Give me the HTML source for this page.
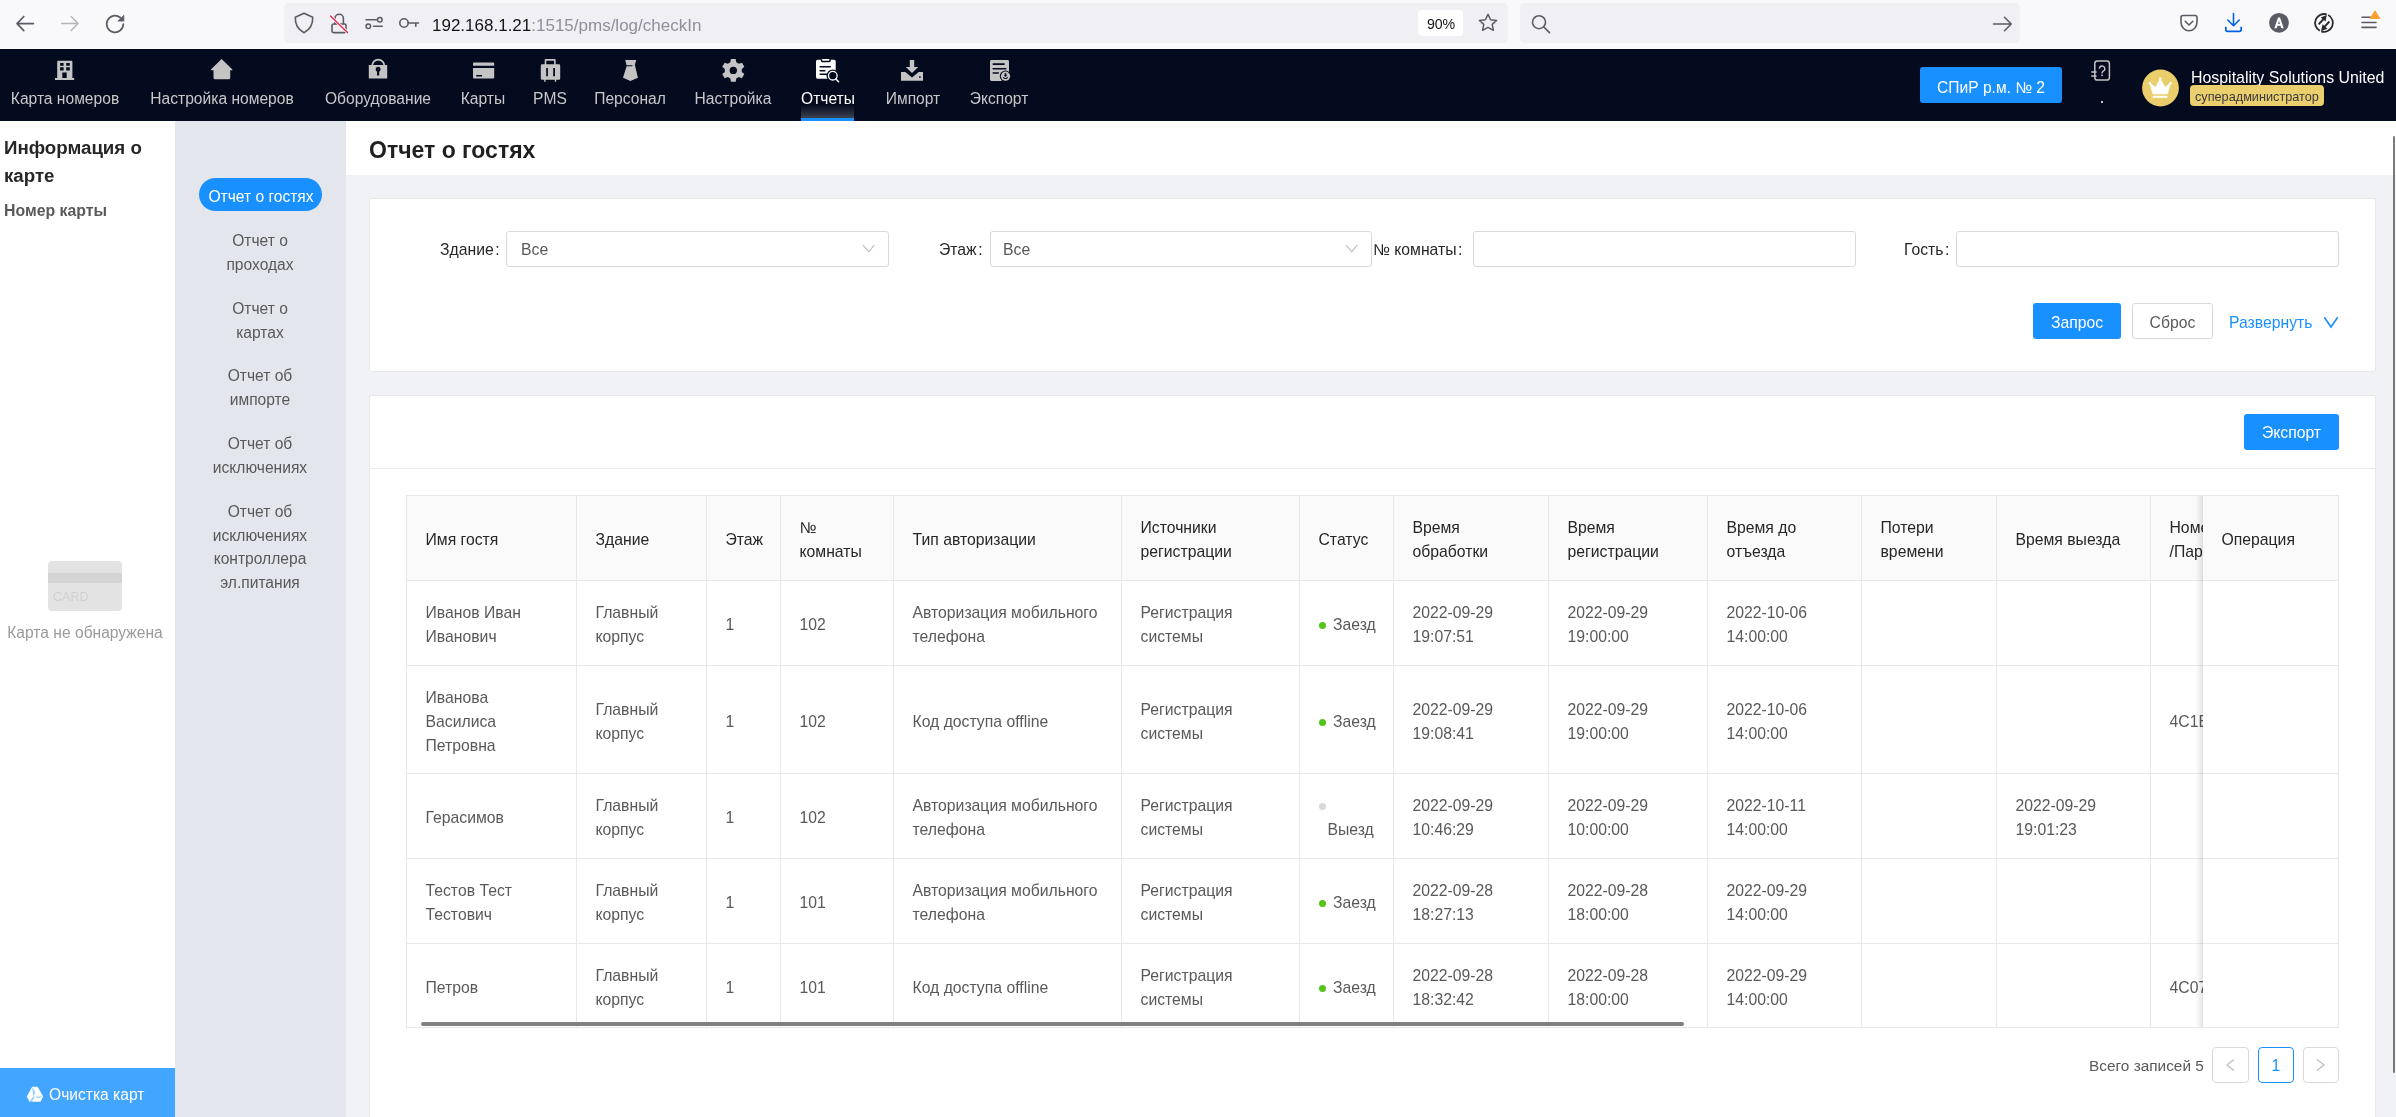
<!DOCTYPE html>
<html><head><meta charset="utf-8">
<style>
*{box-sizing:border-box}
html,body{margin:0;padding:0}
body{width:2396px;height:1117px;overflow:hidden;position:relative;background:#fff;font-family:"Liberation Sans",sans-serif;color:#262626}
.a{position:absolute}
.t{position:absolute;white-space:nowrap;line-height:1}
/* chrome */
#chrome{left:0;top:0;width:2396px;height:49px;background:#F9F9FB;border-bottom:1px solid #FDFDFD}
#url{left:284px;top:3px;width:1224px;height:40px;background:#F0F0F4;border-radius:5px}
#srch{left:1520px;top:3px;width:500px;height:40px;background:#F0F0F4;border-radius:5px}
/* nav */
#nav{left:0;top:49px;width:2396px;height:72px;background:#050B1E}
.ni{position:absolute;top:90.8px;font-size:15.6px;letter-spacing:0px;color:#C8C8C8;white-space:nowrap;line-height:1;transform:translateX(-50%)}
.ic{position:absolute;fill:#C4C4C4}
/* left */
#left{left:0;top:121px;width:175px;height:996px;background:#fff}
#sub{left:175px;top:121px;width:170px;height:996px;background:#E3E6ED}
.si{position:absolute;left:175px;width:170px;text-align:center;font-size:15.6px;line-height:23.7px;color:#595959;margin-top:1.2px}
#main{left:345px;top:121px;width:2051px;height:996px;background:#F0F2F5}
#mhead{left:345px;top:121px;width:2051px;height:54px;background:#fff}
.card{position:absolute;background:#fff;border:1px solid #E8E8E8;border-radius:2px}
.lbl{position:absolute;font-size:15.75px;color:#262626;white-space:nowrap;line-height:20px}
.inp{position:absolute;top:231px;height:36px;border:1px solid #D9D9D9;border-radius:3px;background:#fff}
.btn{position:absolute;border-radius:3px;font-size:15.75px;text-align:center;white-space:nowrap}
.cell{position:absolute;display:flex;align-items:center;padding:4px 0 0 18.5px;font-size:15.75px;line-height:24px;white-space:nowrap;overflow:hidden}
.dot{display:inline-block;width:7px;height:7px;border-radius:50%;background:#52C41A;margin-right:7.5px;vertical-align:middle;position:relative;top:-0.1px}
.t,.ni,.si,.cell,.lbl,.btn{will-change:transform}
</style></head><body>

<div id="chrome" class="a"></div>
<div id="url" class="a"></div>
<div id="srch" class="a"></div>
<!-- chrome icons -->
<svg class="a" style="left:0;top:0" width="2396" height="48" viewBox="0 0 2396 48">
 <g fill="none" stroke-linecap="round" stroke-linejoin="round">
  <!-- back -->
  <path d="M17 23.6H33.4M23.8 16.5L17 23.6L23.8 30.6" stroke="#5B5B66" stroke-width="1.7"/>
  <!-- forward -->
  <path d="M61.6 23.6H78M71.2 16.5L78 23.6L71.2 30.6" stroke="#B4B4BB" stroke-width="1.5"/>
  <!-- reload -->
  <path d="M123.3 24A8.3 8.3 0 1 1 120.2 17.5" stroke="#5B5B66" stroke-width="1.7"/>
  <path d="M123.8 15.6V21.1H118.3Z" fill="#5B5B66" stroke="#5B5B66" stroke-width="0.8"/>
  <!-- shield -->
  <path d="M304 13.2L312.7 17.3C313 24 310 29.5 304 32.8C298 29.5 295 24 295.3 17.3Z" stroke="#5B5B66" stroke-width="1.6"/>
  <!-- lock with slash -->
  <path d="M332 25.5C332 24.5 332.6 24 333.6 24H344.6C345.6 24 346 24.5 346 25.5V31.3C346 32.1 345.5 32.6 344.6 32.6H333.6C332.6 32.6 332 32.1 332 31.3Z" stroke="#5B5B66" stroke-width="1.6"/>
  <path d="M335 24V18.5A4.2 4.2 0 0 1 343.4 18.5V24" stroke="#5B5B66" stroke-width="1.6"/>
  <path d="M330.5 16L347.5 32.4" stroke="#F9F9FB" stroke-width="3"/>
  <path d="M330.5 16L347.5 32.4" stroke="#E8234E" stroke-width="1.4"/>
  <!-- permissions sliders -->
  <path d="M366 19.8H376.5M373.5 26.3H382.2" stroke="#5B5B66" stroke-width="1.5"/>
  <circle cx="379.8" cy="19.7" r="2.3" stroke="#5B5B66" stroke-width="1.5"/>
  <circle cx="368.3" cy="26.2" r="2.3" stroke="#5B5B66" stroke-width="1.5"/>
  <!-- key -->
  <circle cx="404" cy="23" r="4.2" stroke="#5B5B66" stroke-width="1.6"/>
  <path d="M408.2 23H418.5M415.8 23V26.3" stroke="#5B5B66" stroke-width="1.6"/>
  <!-- star -->
  <path d="M1488 14.2L1490.6 19.7L1496.6 20.4L1492.2 24.4L1493.4 30.3L1488 27.3L1482.6 30.3L1483.8 24.4L1479.4 20.4L1485.4 19.7Z" stroke="#5B5B66" stroke-width="1.5"/>
  <!-- search -->
  <circle cx="1539" cy="22.2" r="6.5" stroke="#5B5B66" stroke-width="1.6"/>
  <path d="M1543.8 27L1549.5 32.6" stroke="#5B5B66" stroke-width="1.7"/>
  <!-- go arrow -->
  <path d="M1993.5 24H2011.2M2004.5 17.3L2011.2 24L2004.5 30.7" stroke="#5B5B66" stroke-width="1.6"/>
  <!-- pocket -->
  <path d="M2181 17.5C2181 16.2 2181.8 15.5 2183 15.5H2195C2196.3 15.5 2197 16.2 2197 17.5V22C2197 27 2193.5 30.8 2189 30.8C2184.5 30.8 2181 27 2181 22Z" stroke="#5B5B66" stroke-width="1.6"/>
  <path d="M2185.2 21.3L2189 25L2192.8 21.3" stroke="#5B5B66" stroke-width="1.6"/>
  <!-- download -->
  <path d="M2233.5 13.5V25.5M2227.8 20L2233.5 25.7L2239.2 20" stroke="#0061E0" stroke-width="1.6"/>
  <path d="M2225.8 27.3V29.5C2225.8 30.8 2226.6 31.4 2227.8 31.4H2239.2C2240.4 31.4 2241.2 30.8 2241.2 29.5V27.3" stroke="#0061E0" stroke-width="1.7"/>
  <!-- menu -->
  <path d="M2362 17.3H2370.5M2362 22.5H2376M2362 27.4H2376" stroke="#5B5B66" stroke-width="1.6"/>
 </g>
 <!-- avatar A -->
 <circle cx="2279" cy="22.8" r="9.9" fill="#5B5B66"/>
 <path d="M2274.3 28.3L2278 17.5H2280L2283.7 28.3H2281.3L2280.5 25.8H2277.5L2276.7 28.3ZM2278.1 23.9H2279.9L2279 20.8Z" fill="#fff"/>
 <!-- extension -->
 <path d="M2328.18 15.04A8.9 8.9 0 0 1 2321.25 31.36M2319.82 30.76A8.9 8.9 0 0 1 2326.75 14.44" fill="none" stroke="#2B2A33" stroke-width="1.8"/>
 <path d="M2318.6 24.4L2323.6 19M2329.4 21.5L2324.4 26.8" fill="none" stroke="#2B2A33" stroke-width="1.9"/>
 <path d="M2320.7 17.6L2326.7 15L2325.6 21.4ZM2322.6 24.2L2321 31L2327.5 28.8Z" fill="#2B2A33"/>
 <!-- orange badge -->
 <path d="M2375 10.8L2379.8 18.4H2370.2Z" fill="#FF9F2F" stroke="#FF9F2F" stroke-width="1" stroke-linejoin="round"/>
</svg>
<div class="a" style="left:1418px;top:10px;width:45px;height:26px;background:#fff;border-radius:4px"></div>
<div class="t" style="left:1426.5px;top:17.4px;font-size:14.2px;letter-spacing:-0.2px;color:#15141A">90%</div>
<div class="t" style="left:432px;top:17.4px;font-size:17px;color:#15141A">192.168.1.21<span style="color:#8F8F9D">:1515/pms/log/checkIn</span></div>

<div id="nav" class="a"></div>
<div class="ni" style="left:65px">Карта номеров</div>
<div class="ni" style="left:221.7px">Настройка номеров</div>
<div class="ni" style="left:377.5px">Оборудование</div>
<div class="ni" style="left:482.5px">Карты</div>
<div class="ni" style="left:550.4px">PMS</div>
<div class="ni" style="left:630.2px">Персонал</div>
<div class="ni" style="left:733.3px">Настройка</div>
<div class="ni" style="left:827.6px;color:#fff">Отчеты</div>
<div class="ni" style="left:912.5px">Импорт</div>
<div class="ni" style="left:999.2px">Экспорт</div>
<div class="a" style="left:801px;top:105px;width:53px;height:16px;background:linear-gradient(#050B1E,#4A4E5C)"></div>
<div class="a" style="left:801px;top:118px;width:53px;height:3px;background:#1890FF"></div>
<svg class="a" style="left:0;top:49px" width="1100" height="72" viewBox="0 49 1100 72">
 <g fill="#C4C4C4">
  <!-- building -->
  <path fill-rule="evenodd" d="M57.2 61.8Q57.2 60.8 58.2 60.8H71.4Q72.4 60.8 72.4 61.8V78H74.2V80H55V78H57.2ZM60.1 62.9V65.8H63.6V62.9ZM66.2 62.9V65.8H69.8V62.9ZM60.1 67.2V70.4H63.6V67.2ZM66.2 67.2V70.4H69.8V67.2ZM62.3 72.5V78H66.7V72.5Z"/>
  <!-- house -->
  <path d="M221.6 59L232.4 69.6V70.3H230.2V77.7Q230.2 79.2 228.7 79.2H215Q213.5 79.2 213.5 77.7V70.3H210.9V69.6Z"/>
  <!-- lock -->
  <path fill-rule="evenodd" d="M371.4 64.9V65.6A6.85 6.85 0 0 1 385.1 65.6V64.9H387.2V78.4H368.8V64.9ZM373.1 64.9H383.4V65.6A5.15 5.15 0 0 0 373.1 65.6ZM378.1 66.8A2.6 2.6 0 0 0 377 71.7V75.6H379.2V71.7A2.6 2.6 0 0 0 378.1 66.8Z"/>
  <!-- card -->
  <path fill-rule="evenodd" d="M473 63.6Q473 62.6 474 62.6H493.2Q494.2 62.6 494.2 63.6V65.8H473ZM473 68.1H494.2V77.4Q494.2 78.4 493.2 78.4H474Q473 78.4 473 77.4ZM476.2 74.9V76.4H482V74.9Z"/>
  <!-- suitcase -->
  <path fill-rule="evenodd" d="M544.7 64.3V60.3Q544.7 59.1 545.9 59.1H554.5Q555.7 59.1 555.7 60.3V64.3H558.8Q560.2 64.3 560.2 65.7V78.4Q560.2 79.8 558.8 79.8H556.2V81.8H554.8V79.8H545.6V81.8H544.2V79.8H542.2Q540.8 79.8 540.8 78.4V65.7Q540.8 64.3 542.2 64.3ZM546.3 64.3H554.1V60.7H546.3ZM546.2 68.1V76.3H547.9V68.1ZM553.2 68.1V76.3H555V68.1Z"/>
  <!-- tie -->
  <path d="M625.2 60H636.2L634.8 65.2H626.6Z"/>
  <path d="M626.6 66.3H632.2L632.8 65H634.9L637.9 77.8L630.4 81.1L623 77.8Z"/>
  <!-- gear -->
  <path fill-rule="evenodd" d="M730.36 62.32L730.89 59.05L735.71 59.05L736.24 62.32L738.83 63.81L741.92 62.64L744.33 66.82L741.77 68.91L741.77 71.89L744.33 73.98L741.92 78.16L738.83 76.99L736.24 78.48L735.71 81.75L730.89 81.75L730.36 78.48L727.77 76.99L724.68 78.16L722.27 73.98L724.83 71.89L724.83 68.91L722.27 66.82L724.68 62.64L727.77 63.81ZM737.00 70.4A3.7 3.7 0 1 0 729.60 70.4A3.7 3.7 0 1 0 737.00 70.4Z"/>
  <!-- download tray -->
  <path d="M909.8 60H914.2V67H918.2L912 73L905.8 67H909.8Z"/>
  <path fill-rule="evenodd" d="M901 72H905.3L912 77.6L918.7 72H923V80.7H901ZM919.2 76.3V77.9H920.6V76.3Z"/>
  <!-- export doc -->
  <defs><mask id="em"><rect x="980" y="50" width="40" height="40" fill="#fff"/>
   <rect x="992.4" y="63.3" width="12.5" height="1.6" rx="0.8" fill="#000"/>
   <rect x="992.4" y="67.9" width="14.2" height="1.6" rx="0.8" fill="#000"/>
   <rect x="992.4" y="72.2" width="6.7" height="1.6" rx="0.8" fill="#000"/>
   <circle cx="1005.5" cy="76.2" r="5.7" fill="#000"/>
  </mask></defs>
  <rect x="990" y="60" width="19" height="20.9" rx="1.4" mask="url(#em)"/>
  <circle cx="1005.5" cy="76.2" r="4.6"/>
  <path d="M1004.6 73.3H1006.4V75.2H1007.3L1005.5 77L1003.7 75.2H1004.6Z" fill="#050B1E"/>
  <path d="M1003.2 77.3Q1005.5 79.6 1007.8 77.3" fill="none" stroke="#050B1E" stroke-width="1.1"/>
 </g>
 <!-- report (white) -->
 <defs><mask id="rm"><rect x="800" y="50" width="50" height="40" fill="#fff"/>
  <path d="M820.8 59.5H830.8V60.6Q830.8 62.2 829.2 62.2H822.4Q820.8 62.2 820.8 60.6Z" fill="#000"/>
  <rect x="819.4" y="66" width="11.6" height="1.5" rx="0.7" fill="#000"/>
  <rect x="819.4" y="69.9" width="6.2" height="1.5" rx="0.7" fill="#000"/>
  <rect x="819.4" y="73.5" width="8" height="1.5" rx="0.7" fill="#000"/>
  <circle cx="832.8" cy="75.7" r="6.3" fill="#000"/>
 </mask></defs>
 <g fill="#fff">
  <rect x="816" y="59.7" width="19.7" height="19" rx="1.6" mask="url(#rm)"/>
  <rect x="822.1" y="58.9" width="7.3" height="1.9" rx="0.9"/>
  <circle cx="832.8" cy="75.7" r="4.3" fill="none" stroke="#fff" stroke-width="1.3"/>
  <path d="M835.9 79L838.6 81.8" stroke="#fff" stroke-width="1.5" stroke-linecap="round"/>
 </g>
</svg>

<!-- nav right -->
<div class="a" style="left:1920px;top:67px;width:142px;height:36px;background:#1890FF;border-radius:3px"></div>
<div class="t" style="left:1991px;top:80.4px;font-size:15.6px;color:#fff;transform:translateX(-50%)">СПиР р.м. № 2</div>
<svg class="a" style="left:2080px;top:52px" width="320" height="64" viewBox="2080 52 320 64">
 <rect x="2094.8" y="61" width="14.6" height="19" rx="2.6" fill="none" stroke="#C4C4C4" stroke-width="1.5"/>
 <path d="M2091.2 72H2096.6M2091.2 76H2096.6" stroke="#C4C4C4" stroke-width="1.4"/>
 <path d="M2099.4 68.6A2.7 2.7 0 1 1 2103.2 71.2Q2102 72 2102 73.6" fill="none" stroke="#C4C4C4" stroke-width="1.4"/>
 <rect x="2101.2" y="74.6" width="1.6" height="1.6" fill="#C4C4C4"/>
 <rect x="2101" y="101" width="2" height="2" fill="#C4C4C4"/>
 <circle cx="2160.5" cy="88" r="18.4" fill="#EBCE6C"/>
 <path d="M2150.2 83.6L2155.6 87.6L2160.3 79.2L2165 87.6L2170.2 83.6L2167.4 93.8H2153Z" fill="#fff" stroke="#fff" stroke-width="1" stroke-linejoin="round"/>
 <circle cx="2160.3" cy="78.8" r="1.3" fill="#fff"/>
 <circle cx="2150" cy="83.3" r="1.3" fill="#fff"/>
 <circle cx="2170.6" cy="83.3" r="1.3" fill="#fff"/>
 <rect x="2152.8" y="95.8" width="14.6" height="2" fill="#fff"/>
</svg>
<div class="t" style="left:2190.6px;top:69.6px;font-size:15.9px;color:#fff">Hospitality Solutions United</div>
<div class="a" style="left:2190px;top:85px;width:134px;height:21px;background:#EBCF6E;border-radius:4px"></div>
<div class="t" style="left:2195px;top:91px;font-size:12.7px;color:#3A3A3A">суперадминистратор</div>

<div id="left" class="a"></div>
<div id="sub" class="a"></div>
<div id="main" class="a"></div>
<div id="mhead" class="a"></div>
<div class="a" style="left:345px;top:121px;width:1px;height:996px;background:#E4E5E9"></div>

<!-- left panel -->
<div class="t" style="left:4.3px;top:138.6px;font-size:18.7px;font-weight:700;color:#262626">Информация о</div>
<div class="t" style="left:4.3px;top:166.5px;font-size:18.7px;font-weight:700;color:#262626">карте</div>
<div class="t" style="left:4.3px;top:203.3px;font-size:15.85px;font-weight:700;color:#595959">Номер карты</div>
<div class="a" style="left:48px;top:561px;width:74px;height:50px;background:#E3E3E3;border-radius:4px;overflow:hidden">
 <div class="a" style="left:0;top:12.4px;width:74px;height:9.4px;background:#D4D4D4"></div>
 <div class="t" style="left:5.3px;top:30px;font-size:12.6px;color:#D0D0D0">CARD</div>
</div>
<div class="t" style="left:85px;top:625.1px;font-size:15.6px;color:#9A9A9A;transform:translateX(-50%)">Карта не обнаружена</div>
<div class="a" style="left:0;top:1068px;width:175px;height:49px;background:#42A5FF"></div>
<svg class="a" style="left:26px;top:1086px" width="18" height="17" viewBox="0 0 18 17">
 <path d="M6.2 0.8H11.6L17.2 10.4L14.5 15.8H3.5L0.8 10.4Z" fill="#fff"/>
 <path d="M6.2 0.8L9.5 6.6L7.2 10.4ZM17.2 10.4H9.4L11.9 12.3ZM3.5 15.8L7.2 10.4H9L5.8 15.8Z" fill="#42A5FF" opacity="0.55"/>
</svg>
<div class="t" style="left:48.7px;top:1086.9px;font-size:15.6px;color:#fff">Очистка карт</div>

<!-- sub nav -->
<div class="a" style="left:199px;top:178px;width:123px;height:33px;background:#1890FF;border-radius:17px"></div>
<div class="t" style="left:260.5px;top:188.7px;font-size:15.6px;color:#fff;transform:translateX(-50%)">Отчет о гостях</div>
<div class="si" style="top:227.4px">Отчет о<br>проходах</div>
<div class="si" style="top:295.4px">Отчет о<br>картах</div>
<div class="si" style="top:362.4px">Отчет об<br>импорте</div>
<div class="si" style="top:430.4px">Отчет об<br>исключениях</div>
<div class="si" style="top:498.4px">Отчет об<br>исключениях<br>контроллера<br>эл.питания</div>

<!-- main -->
<div class="t" style="left:368.8px;top:138.5px;font-size:23px;font-weight:700;color:#1F1F1F">Отчет о гостях</div>
<div class="card" style="left:369px;top:198px;width:2007px;height:174px"></div>
<div class="card" style="left:369px;top:395px;width:2007px;height:740px"></div>

<!-- filter form -->
<div class="lbl" style="left:439.7px;top:240px">Здание<span style="margin-left:1.5px">:</span></div>
<div class="inp" style="left:506px;width:383px"></div>
<div class="t" style="left:520.5px;top:242px;font-size:15.75px;color:#595959">Все</div>
<svg class="a" style="left:860px;top:242px" width="18" height="14"><path d="M3 3.2L8.8 9.9L14.2 3.2" fill="none" stroke="#BFBFBF" stroke-width="1.15"/></svg>
<div class="lbl" style="left:938.8px;top:240px">Этаж<span style="margin-left:1.5px">:</span></div>
<div class="inp" style="left:990px;width:382px"></div>
<div class="t" style="left:1003.4px;top:242px;font-size:15.75px;color:#595959">Все</div>
<svg class="a" style="left:1343px;top:242px" width="18" height="14"><path d="M3 3.2L8.8 9.9L14.2 3.2" fill="none" stroke="#BFBFBF" stroke-width="1.15"/></svg>
<div class="lbl" style="left:1373.3px;top:240px">№ комнаты<span style="margin-left:1.5px">:</span></div>
<div class="inp" style="left:1473px;width:383px"></div>
<div class="lbl" style="left:1903.5px;top:240px">Гость<span style="margin-left:1.5px">:</span></div>
<div class="inp" style="left:1956px;width:383px"></div>

<div class="btn" style="left:2033px;top:303px;width:88px;height:36px;background:#1890FF;color:#fff;line-height:39px">Запрос</div>
<div class="btn" style="left:2132px;top:303px;width:81px;height:36px;background:#fff;border:1px solid #D9D9D9;color:#595959;line-height:37px">Сброс</div>
<div class="t" style="left:2229.3px;top:314.5px;font-size:15.75px;color:#1890FF">Развернуть</div>
<svg class="a" style="left:2322px;top:314px" width="18" height="16"><path d="M2.3 3.2L9 13L15.7 3.2" fill="none" stroke="#1890FF" stroke-width="1.6"/></svg>

<!-- table card header -->
<div class="btn" style="left:2244px;top:414px;width:95px;height:36px;background:#1890FF;color:#fff;line-height:38px">Экспорт</div>
<div class="a" style="left:370px;top:468px;width:2005px;height:1px;background:#EBEBEB"></div>

<!-- TABLE START -->
<div class="a" style="left:406px;top:495px;width:1933px;height:86px;background:#FAFAFA"></div>
<div class="a" style="left:406px;top:495px;width:1933px;height:1px;background:#E8E8E8"></div>
<div class="a" style="left:406px;top:580px;width:1933px;height:1px;background:#E8E8E8"></div>
<div class="a" style="left:406px;top:665px;width:1933px;height:1px;background:#E8E8E8"></div>
<div class="a" style="left:406px;top:773px;width:1933px;height:1px;background:#E8E8E8"></div>
<div class="a" style="left:406px;top:858px;width:1933px;height:1px;background:#E8E8E8"></div>
<div class="a" style="left:406px;top:943px;width:1933px;height:1px;background:#E8E8E8"></div>
<div class="a" style="left:406px;top:1027px;width:1933px;height:1px;background:#E8E8E8"></div>
<div class="a" style="left:406px;top:495px;width:1px;height:533px;background:#E8E8E8"></div>
<div class="a" style="left:576px;top:495px;width:1px;height:533px;background:#E8E8E8"></div>
<div class="a" style="left:706px;top:495px;width:1px;height:533px;background:#E8E8E8"></div>
<div class="a" style="left:780px;top:495px;width:1px;height:533px;background:#E8E8E8"></div>
<div class="a" style="left:893px;top:495px;width:1px;height:533px;background:#E8E8E8"></div>
<div class="a" style="left:1121px;top:495px;width:1px;height:533px;background:#E8E8E8"></div>
<div class="a" style="left:1299px;top:495px;width:1px;height:533px;background:#E8E8E8"></div>
<div class="a" style="left:1393px;top:495px;width:1px;height:533px;background:#E8E8E8"></div>
<div class="a" style="left:1548px;top:495px;width:1px;height:533px;background:#E8E8E8"></div>
<div class="a" style="left:1707px;top:495px;width:1px;height:533px;background:#E8E8E8"></div>
<div class="a" style="left:1861px;top:495px;width:1px;height:533px;background:#E8E8E8"></div>
<div class="a" style="left:1996px;top:495px;width:1px;height:533px;background:#E8E8E8"></div>
<div class="a" style="left:2150px;top:495px;width:1px;height:533px;background:#E8E8E8"></div>
<div class="a" style="left:2338px;top:495px;width:1px;height:533px;background:#E8E8E8"></div>
<div class="cell" style="left:407px;top:496px;width:169px;height:84px;color:#262626"><div>Имя гостя</div></div>
<div class="cell" style="left:577px;top:496px;width:129px;height:84px;color:#262626"><div>Здание</div></div>
<div class="cell" style="left:707px;top:496px;width:73px;height:84px;color:#262626"><div>Этаж</div></div>
<div class="cell" style="left:781px;top:496px;width:112px;height:84px;color:#262626"><div>№<br>комнаты</div></div>
<div class="cell" style="left:894px;top:496px;width:227px;height:84px;color:#262626"><div>Тип авторизации</div></div>
<div class="cell" style="left:1122px;top:496px;width:177px;height:84px;color:#262626"><div>Источники<br>регистрации</div></div>
<div class="cell" style="left:1300px;top:496px;width:93px;height:84px;color:#262626"><div>Статус</div></div>
<div class="cell" style="left:1394px;top:496px;width:154px;height:84px;color:#262626"><div>Время<br>обработки</div></div>
<div class="cell" style="left:1549px;top:496px;width:158px;height:84px;color:#262626"><div>Время<br>регистрации</div></div>
<div class="cell" style="left:1708px;top:496px;width:153px;height:84px;color:#262626"><div>Время до<br>отъезда</div></div>
<div class="cell" style="left:1862px;top:496px;width:134px;height:84px;color:#262626"><div>Потери<br>времени</div></div>
<div class="cell" style="left:1997px;top:496px;width:153px;height:84px;color:#262626"><div>Время выезда</div></div>
<div class="cell" style="left:2151px;top:496px;width:187px;height:84px;color:#262626"><div>Номер<br>/Пароль</div></div>
<div class="cell" style="left:407px;top:581px;width:169px;height:84px;color:#595959"><div>Иванов Иван<br>Иванович</div></div>
<div class="cell" style="left:577px;top:581px;width:129px;height:84px;color:#595959"><div>Главный<br>корпус</div></div>
<div class="cell" style="left:707px;top:581px;width:73px;height:84px;color:#595959"><div>1</div></div>
<div class="cell" style="left:781px;top:581px;width:112px;height:84px;color:#595959"><div>102</div></div>
<div class="cell" style="left:894px;top:581px;width:227px;height:84px;color:#595959"><div>Авторизация мобильного<br>телефона</div></div>
<div class="cell" style="left:1122px;top:581px;width:177px;height:84px;color:#595959"><div>Регистрация<br>системы</div></div>
<div class="cell" style="left:1300px;top:581px;width:93px;height:84px;color:#595959"><div><span class="dot"></span>Заезд</div></div>
<div class="cell" style="left:1394px;top:581px;width:154px;height:84px;color:#595959"><div>2022-09-29<br>19:07:51</div></div>
<div class="cell" style="left:1549px;top:581px;width:158px;height:84px;color:#595959"><div>2022-09-29<br>19:00:00</div></div>
<div class="cell" style="left:1708px;top:581px;width:153px;height:84px;color:#595959"><div>2022-10-06<br>14:00:00</div></div>
<div class="cell" style="left:407px;top:666px;width:169px;height:107px;color:#595959"><div>Иванова<br>Василиса<br>Петровна</div></div>
<div class="cell" style="left:577px;top:666px;width:129px;height:107px;color:#595959"><div>Главный<br>корпус</div></div>
<div class="cell" style="left:707px;top:666px;width:73px;height:107px;color:#595959"><div>1</div></div>
<div class="cell" style="left:781px;top:666px;width:112px;height:107px;color:#595959"><div>102</div></div>
<div class="cell" style="left:894px;top:666px;width:227px;height:107px;color:#595959"><div>Код доступа offline</div></div>
<div class="cell" style="left:1122px;top:666px;width:177px;height:107px;color:#595959"><div>Регистрация<br>системы</div></div>
<div class="cell" style="left:1300px;top:666px;width:93px;height:107px;color:#595959"><div><span class="dot"></span>Заезд</div></div>
<div class="cell" style="left:1394px;top:666px;width:154px;height:107px;color:#595959"><div>2022-09-29<br>19:08:41</div></div>
<div class="cell" style="left:1549px;top:666px;width:158px;height:107px;color:#595959"><div>2022-09-29<br>19:00:00</div></div>
<div class="cell" style="left:1708px;top:666px;width:153px;height:107px;color:#595959"><div>2022-10-06<br>14:00:00</div></div>
<div class="cell" style="left:2151px;top:666px;width:187px;height:107px;color:#595959"><div>4C1E8A20</div></div>
<div class="cell" style="left:407px;top:774px;width:169px;height:84px;color:#595959"><div>Герасимов</div></div>
<div class="cell" style="left:577px;top:774px;width:129px;height:84px;color:#595959"><div>Главный<br>корпус</div></div>
<div class="cell" style="left:707px;top:774px;width:73px;height:84px;color:#595959"><div>1</div></div>
<div class="cell" style="left:781px;top:774px;width:112px;height:84px;color:#595959"><div>102</div></div>
<div class="cell" style="left:894px;top:774px;width:227px;height:84px;color:#595959"><div>Авторизация мобильного<br>телефона</div></div>
<div class="cell" style="left:1122px;top:774px;width:177px;height:84px;color:#595959"><div>Регистрация<br>системы</div></div>
<div class="cell" style="left:1300px;top:774px;width:93px;height:84px;color:#595959"><div><span class="dot" style="background:#D9D9D9"></span><br><span style="margin-left:9px">Выезд</span></div></div>
<div class="cell" style="left:1394px;top:774px;width:154px;height:84px;color:#595959"><div>2022-09-29<br>10:46:29</div></div>
<div class="cell" style="left:1549px;top:774px;width:158px;height:84px;color:#595959"><div>2022-09-29<br>10:00:00</div></div>
<div class="cell" style="left:1708px;top:774px;width:153px;height:84px;color:#595959"><div>2022-10-11<br>14:00:00</div></div>
<div class="cell" style="left:1997px;top:774px;width:153px;height:84px;color:#595959"><div>2022-09-29<br>19:01:23</div></div>
<div class="cell" style="left:407px;top:859px;width:169px;height:84px;color:#595959"><div>Тестов Тест<br>Тестович</div></div>
<div class="cell" style="left:577px;top:859px;width:129px;height:84px;color:#595959"><div>Главный<br>корпус</div></div>
<div class="cell" style="left:707px;top:859px;width:73px;height:84px;color:#595959"><div>1</div></div>
<div class="cell" style="left:781px;top:859px;width:112px;height:84px;color:#595959"><div>101</div></div>
<div class="cell" style="left:894px;top:859px;width:227px;height:84px;color:#595959"><div>Авторизация мобильного<br>телефона</div></div>
<div class="cell" style="left:1122px;top:859px;width:177px;height:84px;color:#595959"><div>Регистрация<br>системы</div></div>
<div class="cell" style="left:1300px;top:859px;width:93px;height:84px;color:#595959"><div><span class="dot"></span>Заезд</div></div>
<div class="cell" style="left:1394px;top:859px;width:154px;height:84px;color:#595959"><div>2022-09-28<br>18:27:13</div></div>
<div class="cell" style="left:1549px;top:859px;width:158px;height:84px;color:#595959"><div>2022-09-28<br>18:00:00</div></div>
<div class="cell" style="left:1708px;top:859px;width:153px;height:84px;color:#595959"><div>2022-09-29<br>14:00:00</div></div>
<div class="cell" style="left:407px;top:944px;width:169px;height:83px;color:#595959"><div>Петров</div></div>
<div class="cell" style="left:577px;top:944px;width:129px;height:83px;color:#595959"><div>Главный<br>корпус</div></div>
<div class="cell" style="left:707px;top:944px;width:73px;height:83px;color:#595959"><div>1</div></div>
<div class="cell" style="left:781px;top:944px;width:112px;height:83px;color:#595959"><div>101</div></div>
<div class="cell" style="left:894px;top:944px;width:227px;height:83px;color:#595959"><div>Код доступа offline</div></div>
<div class="cell" style="left:1122px;top:944px;width:177px;height:83px;color:#595959"><div>Регистрация<br>системы</div></div>
<div class="cell" style="left:1300px;top:944px;width:93px;height:83px;color:#595959"><div><span class="dot"></span>Заезд</div></div>
<div class="cell" style="left:1394px;top:944px;width:154px;height:83px;color:#595959"><div>2022-09-28<br>18:32:42</div></div>
<div class="cell" style="left:1549px;top:944px;width:158px;height:83px;color:#595959"><div>2022-09-28<br>18:00:00</div></div>
<div class="cell" style="left:1708px;top:944px;width:153px;height:83px;color:#595959"><div>2022-09-29<br>14:00:00</div></div>
<div class="cell" style="left:2151px;top:944px;width:187px;height:83px;color:#595959"><div>4C07B3F1</div></div>
<div class="a" style="left:2195px;top:496px;width:8px;height:531px;background:linear-gradient(to left,rgba(0,0,0,0.115),rgba(0,0,0,0.03) 60%,rgba(0,0,0,0))"></div>
<div class="a" style="left:2203px;top:496px;width:135px;height:84px;background:#FAFAFA"></div>
<div class="a" style="left:2203px;top:581px;width:135px;height:84px;background:#fff"></div>
<div class="a" style="left:2203px;top:666px;width:135px;height:107px;background:#fff"></div>
<div class="a" style="left:2203px;top:774px;width:135px;height:84px;background:#fff"></div>
<div class="a" style="left:2203px;top:859px;width:135px;height:84px;background:#fff"></div>
<div class="a" style="left:2203px;top:944px;width:135px;height:83px;background:#fff"></div>
<div class="cell" style="left:2203px;top:496px;width:135px;height:84px;color:#262626"><div>Операция</div></div>
<div class="a" style="left:421px;top:1021.5px;width:1263px;height:4px;background:#808080;border-radius:2px"></div>
<!-- TABLE END -->
<!-- pagination -->
<div class="t" style="left:2088.6px;top:1057.8px;font-size:15.4px;color:#595959">Всего записей 5</div>
<div class="a" style="left:2212px;top:1047px;width:37px;height:36px;border:1px solid #D9D9D9;border-radius:4px;background:#fff"></div>
<svg class="a" style="left:2222px;top:1056px" width="16" height="18"><path d="M12 3.5L5 9L12 14.5" fill="none" stroke="#BFBFBF" stroke-width="1.3"/></svg>
<div class="a" style="left:2258px;top:1047px;width:36px;height:36px;border:1px solid #1890FF;border-radius:4px;background:#fff"></div>
<div class="t" style="left:2276px;top:1057.8px;font-size:15.75px;color:#1890FF;transform:translateX(-50%)">1</div>
<div class="a" style="left:2303px;top:1047px;width:36px;height:36px;border:1px solid #D9D9D9;border-radius:4px;background:#fff"></div>
<svg class="a" style="left:2313px;top:1056px" width="16" height="18"><path d="M4 3.5L11 9L4 14.5" fill="none" stroke="#BFBFBF" stroke-width="1.3"/></svg>
<!-- v scrollbar -->
<div class="a" style="left:2393px;top:136px;width:2px;height:937px;background:#7B7B7B;border-radius:1px"></div>
</body></html>
